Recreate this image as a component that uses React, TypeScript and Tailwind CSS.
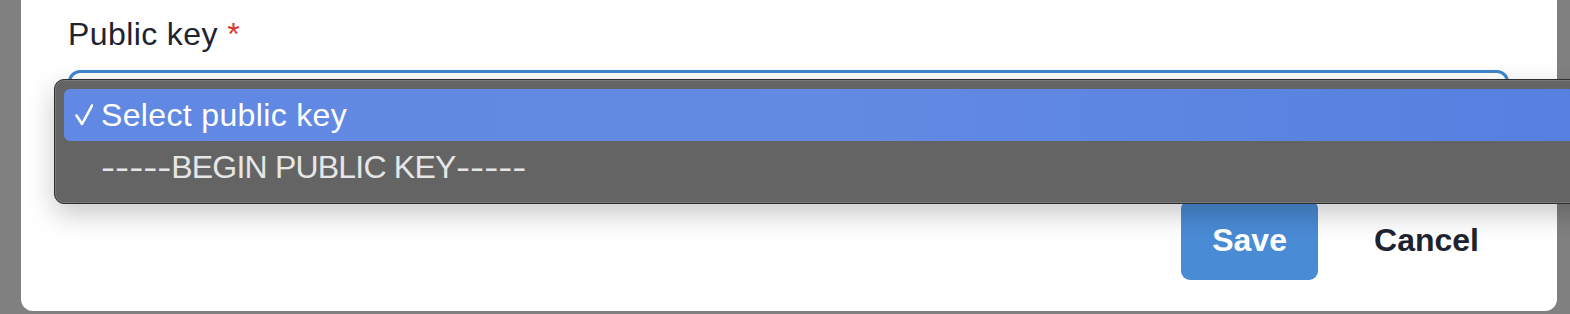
export default function App() {
  return (
    <div className="relative h-[314px] w-[1570px] overflow-hidden bg-[#808080] font-['Liberation_Sans',Arial,sans-serif]">
      {/* modal */}
      <div className="ml-[21px] flex h-[311px] w-[1536px] flex-col rounded-b-[12px] bg-white pl-[47px] pr-[45px]">
        <label className="block pt-[14px] text-[32px] leading-[40px] tracking-[0.4px] text-[#1d2330]">
          Public key <span className="text-[#d9372b]">*</span>
        </label>
        <div className="mr-[3px] mt-[16px] h-[84px] rounded-[12px] border-[3px] border-[#3f86cc] bg-white" />
        <div className="mt-[46px] flex items-center justify-end">
          <button className="h-[80px] w-[137px] rounded-[9px] bg-[#4a8bd6] text-[32px] font-bold text-white">
            Save
          </button>
          <button className="ml-[23px] h-[80px] px-[33px] text-[32px] font-bold text-[#1d2330]">
            Cancel
          </button>
        </div>
      </div>

      {/* native select popup */}
      <div className="absolute left-[54px] top-[79px] h-[125px] w-[1560px] rounded-[10px] border border-[#2e2e2e] bg-[#646464] p-[9px] shadow-[0_10px_28px_rgba(0,0,0,0.22),inset_0_0_0_1px_rgba(255,255,255,0.14)]">
        <div className="flex h-[52px] items-center rounded-[6px] bg-gradient-to-r from-[#6189e3] via-[#628ae3] to-[#5580e0] pl-[11px] text-[32px] leading-[52px] text-white">
          <svg width="18" height="22" viewBox="0 0 18 22" fill="none" stroke="white" strokeWidth="2.6" strokeLinecap="round" strokeLinejoin="round">
            <path d="M1.5 11.5 L7 20 L17 1.5" />
          </svg>
          <span className="ml-[8px] tracking-[0.35px]">Select public key</span>
        </div>
        <div className="flex h-[52px] items-center pl-[37px] text-[32px] leading-[52px] text-[#e6e6e6]">
          <span className="mr-[17px] inline-block origin-left scale-x-[1.32]">-----</span>
          <span className="tracking-[-0.8px]">BEGIN PUBLIC KEY</span>
          <span className="ml-[1px] inline-block origin-left scale-x-[1.32]">-----</span>
        </div>
      </div>
    </div>
  )
}
